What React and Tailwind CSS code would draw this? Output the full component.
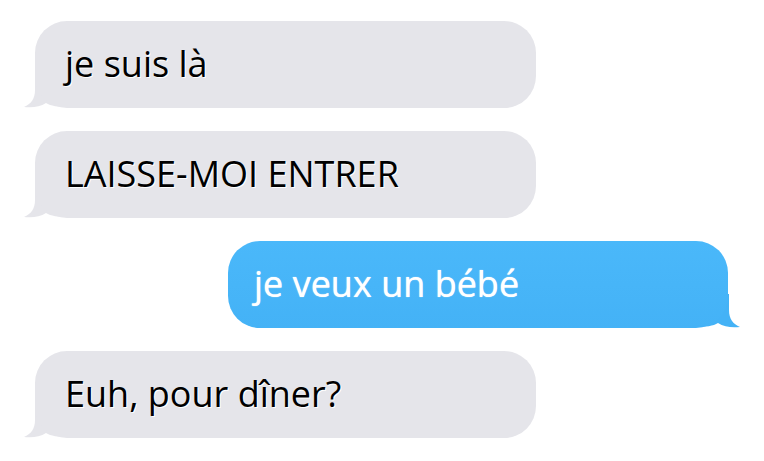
export default function App() {
  const gray = "#e5e5ea";
  const GrayBubble = ({ children }) => (
    <div className="relative ml-[35px] w-[501px] h-[87px]">
      <svg className="absolute left-[-12px] bottom-0" width="48" height="34" viewBox="0 0 48 34">
        <path d="M12 0 L12 16 C12 25 8 30 1 33 C9 34 17 33 23 29 C28 32 34 33 48 33 L48 0 Z" fill={gray} />
      </svg>
      <div className="relative h-full rounded-[32px] bg-[#e5e5ea] flex items-center pl-[30px] pb-[2px]">
        <span className="text-[36px] text-black [font-family:'Open_Sans',sans-serif] [text-shadow:1px_1px_0_#fff] leading-none">
          {children}
        </span>
      </div>
    </div>
  );
  return (
    <div className="w-[764px] h-[461px] bg-white pt-[21px] flex flex-col gap-[23px] overflow-hidden">
      <GrayBubble>je suis là</GrayBubble>
      <GrayBubble>LAISSE-MOI ENTRER</GrayBubble>
      <div className="relative ml-[228px] w-[500px] h-[87px]">
        <svg className="absolute right-[-13px] bottom-0" width="48" height="34" viewBox="0 0 48 34">
          <path d="M36 0 L36 16 C36 25 40 30 47 33 C39 34 31 33 25 29 C20 32 14 33 0 33 L0 0 Z" fill="#44b2f6" />
        </svg>
        <div className="relative h-full rounded-[32px] bg-gradient-to-b from-[#4ab8fa] to-[#44b2f6] flex items-center pl-[26px] pb-[2px]">
          <span className="text-[36px] text-white [font-family:'Open_Sans',sans-serif] [text-shadow:0_0_1px_#fff] leading-none">
            je veux un bébé
          </span>
        </div>
      </div>
      <GrayBubble>Euh, pour dîner?</GrayBubble>
    </div>
  );
}
